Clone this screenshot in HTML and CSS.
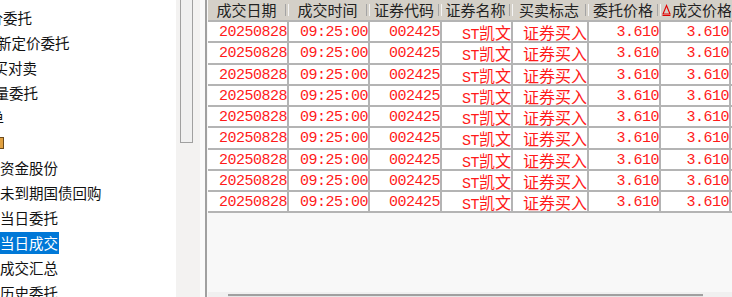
FILE: index.html
```html
<!DOCTYPE html>
<html lang="zh-CN">
<head>
  <meta charset="UTF-8">
  <title>当日成交</title>
  <link rel="stylesheet" href="styles.css">
</head>
<body>
  <div class="app">
    <!-- 左侧功能树 -->
    <div class="tree">
      <ul class="tree-list">
        <li class="node cut-1">市价委托</li>
        <li class="node cut-2">新定价委托</li>
        <li class="node cut-3">对买对卖</li>
        <li class="node cut-4">批量委托</li>
        <li class="node cut-5">撤单</li>
        <li class="node"><span class="folder"></span></li>
        <li class="node child"><span class="label">资金股份</span></li>
        <li class="node child"><span class="label">未到期国债回购</span></li>
        <li class="node child"><span class="label">当日委托</span></li>
        <li class="node child"><span class="label selected">当日成交</span></li>
        <li class="node child"><span class="label">成交汇总</span></li>
        <li class="node child"><span class="label">历史委托</span></li>
      </ul>
    </div>
    <div class="vscroll"><div class="vthumb"></div></div>
    <div class="gap"></div>

    <!-- 成交列表 -->
    <div class="grid">
      <div class="grid-head">
        <div class="hcell"><span class="htext">成交日期</span></div>
        <div class="hcell"><span class="htext">成交时间</span></div>
        <div class="hcell"><span class="htext">证券代码</span></div>
        <div class="hcell"><span class="htext">证券名称</span></div>
        <div class="hcell"><span class="htext">买卖标志</span></div>
        <div class="hcell"><span class="htext">委托价格</span></div>
        <div class="hcell last">
          <span class="htext">
            <svg class="sort" width="9" height="12" viewBox="0 0 9 12"><path d="M1 10 L4.5 1.5 L8 10 Z" fill="none" stroke="#e00000" stroke-width="1.1"/><path d="M0.5 11.5 H8.5" stroke="#e00000" stroke-width="1"/></svg>成交价格
          </span>
        </div>
      </div>

      <div class="grid-body">
        <div class="row"><div class="cell">20250828</div><div class="cell">09:25:00</div><div class="cell">002425</div><div class="cell">ST<span class="cn">凯文</span></div><div class="cell"><span class="cn">证券买入</span></div><div class="cell">3.610</div><div class="cell">3.610</div></div>
        <div class="row"><div class="cell">20250828</div><div class="cell">09:25:00</div><div class="cell">002425</div><div class="cell">ST<span class="cn">凯文</span></div><div class="cell"><span class="cn">证券买入</span></div><div class="cell">3.610</div><div class="cell">3.610</div></div>
        <div class="row"><div class="cell">20250828</div><div class="cell">09:25:00</div><div class="cell">002425</div><div class="cell">ST<span class="cn">凯文</span></div><div class="cell"><span class="cn">证券买入</span></div><div class="cell">3.610</div><div class="cell">3.610</div></div>
        <div class="row"><div class="cell">20250828</div><div class="cell">09:25:00</div><div class="cell">002425</div><div class="cell">ST<span class="cn">凯文</span></div><div class="cell"><span class="cn">证券买入</span></div><div class="cell">3.610</div><div class="cell">3.610</div></div>
        <div class="row"><div class="cell">20250828</div><div class="cell">09:25:00</div><div class="cell">002425</div><div class="cell">ST<span class="cn">凯文</span></div><div class="cell"><span class="cn">证券买入</span></div><div class="cell">3.610</div><div class="cell">3.610</div></div>
        <div class="row"><div class="cell">20250828</div><div class="cell">09:25:00</div><div class="cell">002425</div><div class="cell">ST<span class="cn">凯文</span></div><div class="cell"><span class="cn">证券买入</span></div><div class="cell">3.610</div><div class="cell">3.610</div></div>
        <div class="row"><div class="cell">20250828</div><div class="cell">09:25:00</div><div class="cell">002425</div><div class="cell">ST<span class="cn">凯文</span></div><div class="cell"><span class="cn">证券买入</span></div><div class="cell">3.610</div><div class="cell">3.610</div></div>
        <div class="row"><div class="cell">20250828</div><div class="cell">09:25:00</div><div class="cell">002425</div><div class="cell">ST<span class="cn">凯文</span></div><div class="cell"><span class="cn">证券买入</span></div><div class="cell">3.610</div><div class="cell">3.610</div></div>
        <div class="row"><div class="cell">20250828</div><div class="cell">09:25:00</div><div class="cell">002425</div><div class="cell">ST<span class="cn">凯文</span></div><div class="cell"><span class="cn">证券买入</span></div><div class="cell">3.610</div><div class="cell">3.610</div></div>
      </div>

      <div class="hscroll"><div class="hthumb"></div></div>
    </div>
  </div>
</body>
</html>
```

FILE: styles.css
```css
* {
  margin: 0;
  padding: 0;
  box-sizing: border-box;
}

body {
  width: 732px;
  height: 297px;
  overflow: hidden;
  background: #fff;
}

.app {
  display: flex;
  height: 297px;
}

/* 左侧功能树 */
.tree {
  width: 176px;
  flex-shrink: 0;
  overflow: hidden;
  padding-top: 5px;
  background: #fff;
  font-family: "Noto Sans CJK SC", sans-serif;
  font-size: 14.5px;
  color: #111;
}

.tree-list {
  list-style: none;
}

.node {
  height: 25px;
  display: flex;
  align-items: center;
  white-space: nowrap;
}

.cut-1 { margin-left: -26px; }
.cut-2 { margin-left: -3px; }
.cut-3 { margin-left: -21px; }
.cut-4 { margin-left: -20px; }
.cut-5 { margin-left: -25px; }

.folder {
  width: 4px;
  height: 12px;
  border: 1px solid #6b4a1c;
  border-left: none;
  background: #e0a040;
}

.child {
  margin-left: -1px;
}

.label {
  display: inline-block;
  height: 22px;
  line-height: 22px;
  padding: 0 1px;
}

.selected {
  background: #0078d7;
  color: #fff;
}

/* 滚动条 */
.vscroll {
  width: 24px;
  flex-shrink: 0;
  padding-left: 4px;
  background: #f3f2f1;
}

.vthumb {
  width: 13px;
  height: 143px;
  border: 1px solid #a0a0a0;
  border-top: none;
  background: #f0f0f0;
}

.gap {
  width: 5px;
  flex-shrink: 0;
  background: #fafafa;
}

/* 成交列表 */
.grid {
  flex: 1;
  display: flex;
  flex-direction: column;
  border-left: 2px solid #a0a0a0;
  padding-left: 1px;
  background: #f8f8f8;
  overflow: hidden;
}

.grid-head,
.row {
  display: grid;
  grid-template-columns: 81px 81px 72px 71px 76px 72px 70px;
}

.grid-head {
  height: 20px;
  background: #d4d0c8;
  font-family: "Noto Sans CJK SC", sans-serif;
  font-size: 15px;
  color: #222;
}

.hcell {
  display: flex;
  align-items: center;
  overflow: hidden;
}

.hcell::after {
  content: '';
  width: 2px;
  height: 12px;
  flex-shrink: 0;
  border-left: 1px solid #a4a4a4;
  border-right: 1px solid #f4f4f4;
}

.hcell.last::after {
  display: none;
}

.htext {
  flex: 1;
  text-align: center;
  line-height: 20px;
  white-space: nowrap;
}

.hcell.last .htext {
  text-align: left;
  padding-left: 1px;
  display: flex;
  align-items: center;
}

.sort {
  margin-right: 1px;
  flex-shrink: 0;
}

.grid-body {
  border-top: 2px solid #b4b4b4;
}

.row {
  height: 21.25px;
  background: #fff;
  border-bottom: 2px solid #b4b4b4;
  font-family: "Liberation Mono", "Noto Sans CJK SC", monospace;
  font-size: 15px;
  letter-spacing: -0.5px;
  color: #ff1a1a;
}

.cell {
  border-right: 2px solid #b4b4b4;
  text-align: right;
  padding-top: 2px;
  height: 19.25px;
  line-height: 17px;
  white-space: nowrap;
  overflow: hidden;
}

.cn {
  font-family: "Noto Sans CJK SC", sans-serif;
  font-size: 16px;
  line-height: 1;
  letter-spacing: 0;
}

.hscroll {
  margin-top: auto;
  height: 5px;
  padding: 2px 0 0 20px;
  background: #f0f0f0;
}

.hthumb {
  width: 475px;
  height: 3px;
  border-top: 2px solid #a0a0a0;
  background: #e6e6e6;
}
```
